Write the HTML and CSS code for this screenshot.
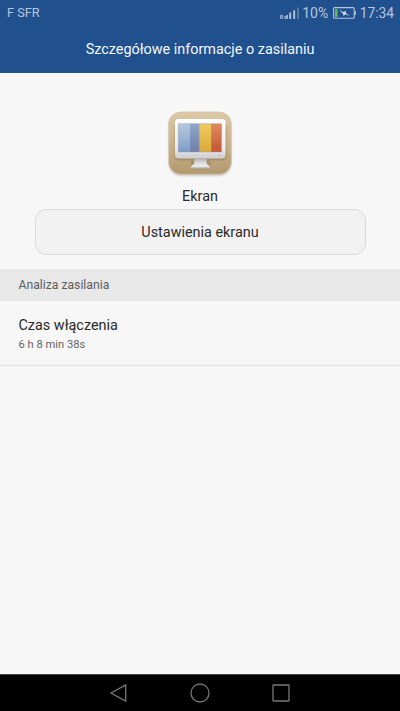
FILE: index.html
```html
<!DOCTYPE html>
<html lang="pl">
<head>
<meta charset="utf-8">
<title>Szczegółowe informacje o zasilaniu</title>
<link rel="stylesheet" href="styles.css">
</head>
<body>
<div class="screen">
  <header class="header">
    <div class="status">
      <span class="carrier">F SFR</span>
      <svg class="signal" width="20" height="14" viewBox="0 0 20 14">
        <path d="M.7 13V9.3h1.2a.9.9 0 0 1 0 1.9H.7M1.9 11.2L3 13" fill="none" stroke="#b5c5dc" stroke-width=".9"/>
        <path d="M4.5 10h1.2v3H4.5zM6.2 9h1.6v4H6.2zM9.3 6.5h1.8V13H9.3zM13.3 4.3h1.8V13h-1.8z" fill="#b5c5dc"/>
        <path d="M17.3 1.5h1.6V13h-1.6z" fill="#6985af"/>
      </svg>
      <span class="percent">10%</span>
      <svg class="battery" width="24" height="14" viewBox="0 0 24 14">
        <rect x=".6" y="1.6" width="20.6" height="10.6" rx="1" fill="none" stroke="#b5c5dc" stroke-width="1.1"/>
        <path d="M21.5 5h1.4v4h-1.4z" fill="#b5c5dc"/>
        <path d="M2 3h2.6v8H2z" fill="#67b84d"/>
        <path d="M6.4 4l4.6 2.2 1.4-1.8 1 3L17 10l-4.6-1.7-1.8 1.8-.7-2.7z" fill="#d0dbe9"/>
      </svg>
      <span class="clock">17:34</span>
    </div>
    <h1 class="title">Szczegółowe informacje o zasilaniu</h1>
  </header>
  <section class="summary">
    <svg class="app-icon" width="66" height="68" viewBox="0 0 66 68">
      <defs>
        <linearGradient id="tan" x2="0" y2="1"><stop stop-color="#dcc8a5"/><stop offset=".5" stop-color="#c9b38e"/><stop offset="1" stop-color="#b3996e"/></linearGradient>
        <linearGradient id="blue" x2="0" y2="1"><stop stop-color="#b4c8df"/><stop offset=".55" stop-color="#98b2d3"/><stop offset="1" stop-color="#799ac7"/></linearGradient>
        <linearGradient id="slate" x2="0" y2="1"><stop stop-color="#92a7ca"/><stop offset="1" stop-color="#6d80aa"/></linearGradient>
        <linearGradient id="gold" x2="0" y2="1"><stop stop-color="#edca5f"/><stop offset="1" stop-color="#dca937"/></linearGradient>
        <linearGradient id="red" x2="0" y2="1"><stop stop-color="#df895f"/><stop offset="1" stop-color="#c65536"/></linearGradient>
        <linearGradient id="metal" x2="0" y2="1"><stop stop-color="#fff"/><stop offset=".8" stop-color="#eaeaec"/><stop offset="1" stop-color="#ccccd0"/></linearGradient>
        <linearGradient id="stand" x2="0" y2="1"><stop stop-color="#b4b4b7"/><stop offset="1" stop-color="#efeff0"/></linearGradient>
        <filter id="soft" x="-20%" y="-20%" width="140%" height="140%"><feGaussianBlur stdDeviation=".8"/></filter>
      </defs>
      <rect x="2" y="3.5" width="62" height="62" rx="12" fill="#77736b" opacity=".45" filter="url(#soft)"/>
      <rect x="1.7" y="2" width="62.6" height="62.3" rx="12" fill="url(#tan)" stroke="#d4c8b2" stroke-width=".8"/>
      <rect x="8" y="13" width="51" height="36.5" rx="4" fill="#77643f" opacity=".6" filter="url(#soft)"/>
      <path d="M24 50h19v9H24z" fill="#77643f" opacity=".35" filter="url(#soft)"/>
      <rect x="8" y="9" width="50.6" height="38.5" rx="3.5" fill="url(#metal)"/>
      <path d="M11.2 13.7h11.7V42H11.2z" fill="url(#blue)"/>
      <path d="M22.8 13.7h10V42h-10z" fill="url(#slate)"/>
      <path d="M32.7 13.7h11.5V42H32.7z" fill="url(#gold)"/>
      <path d="M44.1 13.7h10.5V42H44.1z" fill="url(#red)"/>
      <path d="M11.2 13.7h43.4V42H11.2z" fill="none" stroke="#a5a3a2" stroke-width=".5"/>
      <path d="M8 45h50.6v1q-.6 2.4-3 2.4H11Q8.600 48.400 8 46z" fill="#d3d3d6"/>
      <circle cx="52.500" cy="45.500" r="1" fill="#bbb"/>
      <path d="M27.500 48.400h12l.500 7H27z" fill="url(#stand)"/>
      <path d="M25.500 54.500h15.500l2 2.500v1.300H23.800V57z" fill="#e6e6e7"/>
      <path d="M23.800 57.300H43v1H23.800z" fill="#b8b5b0"/>
    </svg>
    <div class="name">Ekran</div>
    <button class="settings">Ustawienia ekranu</button>
  </section>
  <h2 class="section-title">Analiza zasilania</h2>
  <div class="row">
    <div class="row-label">Czas włączenia</div>
    <div class="row-value">6 h 8 min 38s</div>
  </div>
  <nav class="navbar">
    <svg width="20" height="20" viewBox="0 0 20 20"><path d="M2 10L16.700 1.900v16.200z"/></svg>
    <svg width="20" height="20" viewBox="0 0 20 20"><circle cx="10" cy="10" r="9"/></svg>
    <svg width="20" height="20" viewBox="0 0 20 20"><rect x="2" y="2" width="16" height="16" rx=".5"/></svg>
  </nav>
</div>
</body>
</html>
```
FILE: styles.css
```css
* { box-sizing: border-box; }

body {
  margin: 0;
  background: #f7f7f7;
  color: #2a2a2a;
  font-family: Roboto, "Liberation Sans", sans-serif;
}

.screen {
  height: 711px;
  display: flex;
  flex-direction: column;
}

.header {
  height: 73px;
  flex: none;
  background: #20508e;
}

.status {
  height: 26px;
  display: flex;
  align-items: center;
  padding: 0 6px 0 7px;
  color: #b5c5dc;
  font-size: 14px;
  line-height: 26px;
}

.carrier {
  margin-right: auto;
  font-size: 12.7px;
}

.signal { margin-right: 2px; }
.percent { margin-right: 4.5px; }
.battery { margin-right: 3px; }
.clock { font-size: 13.8px; }

.title {
  margin: 0;
  padding-top: 14px;
  color: #f4f7fb;
  font-size: 14.4px;
  font-weight: 400;
  line-height: 20px;
  text-align: center;
}

.summary {
  height: 196px;
  flex: none;
  display: flex;
  flex-direction: column;
  align-items: center;
  padding-top: 37px;
}

.app-icon { flex: none; }

.name {
  margin-top: 9px;
  font-size: 14.4px;
  line-height: 20px;
}

.settings {
  width: 331px;
  height: 46px;
  margin-top: 2px;
  padding: 2px 0 0;
  border: 1px solid #dadada;
  border-radius: 11px;
  background: #f2f2f2;
  color: inherit;
  font: 14.4px/20px Roboto, "Liberation Sans", sans-serif;
}

.section-title {
  height: 32px;
  flex: none;
  margin: 0;
  padding-left: 18.5px;
  background: #e8e8e8;
  color: #5d5d5d;
  font-size: 12.2px;
  font-weight: 400;
  line-height: 33px;
}

.row {
  height: 65px;
  flex: none;
  padding: 15px 18.5px 0;
  border-bottom: 1px solid #e2e2e2;
}

.row-label {
  font-size: 14.4px;
  line-height: 20px;
}

.row-value {
  color: #666;
  font-size: 11.2px;
  line-height: 17px;
}

.navbar {
  height: 37px;
  flex: none;
  display: flex;
  justify-content: center;
  align-items: center;
  gap: 61px;
  margin-top: auto;
  border-top: 1px solid #484848;
  background: #000;
}

.navbar svg {
  fill: none;
  stroke: #777;
  stroke-width: 1.3;
}
```
